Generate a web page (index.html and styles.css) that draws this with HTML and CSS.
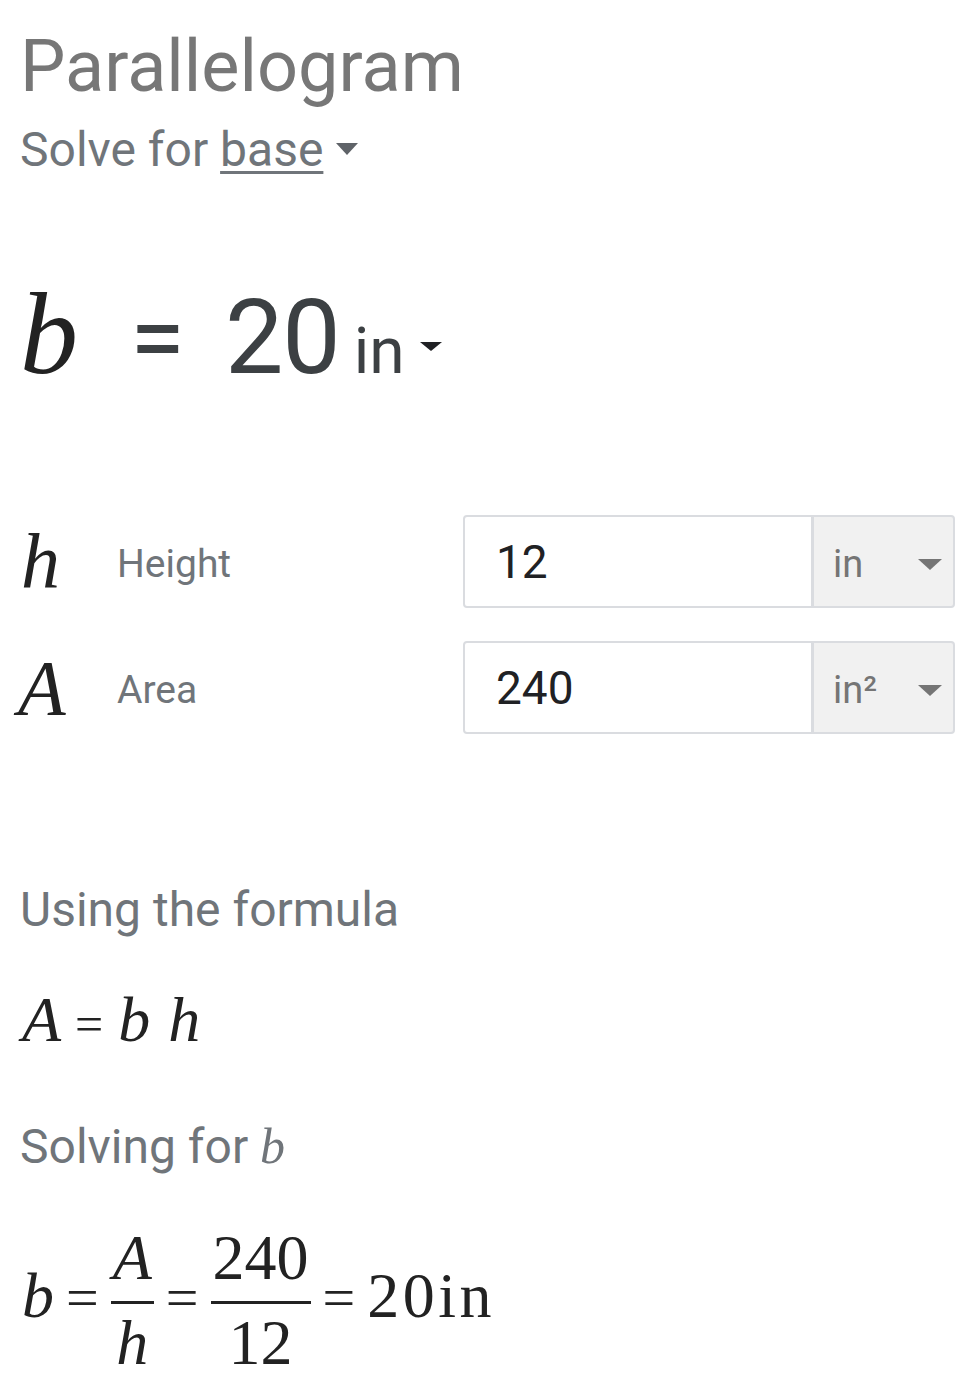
FILE: index.html
```html
<!DOCTYPE html>
<html>
<head>
<meta charset="utf-8">
<link rel="stylesheet" href="styles.css">
</head>
<body>
<div class="page">
  <h1 class="title">Parallelogram</h1>
  <div class="solve">Solve for <span class="sel">base</span><span class="caret caret-solve"></span></div>

  <div class="result"><span class="rvar">b</span><span class="req">=</span><span class="rnum">20</span><span class="runit">in</span><span class="caret caret-result"></span></div>

  <div class="rows">
    <div class="row">
      <span class="var">h</span>
      <span class="label">Height</span>
      <div class="input">12</div>
      <div class="unitsel"><span class="utext">in</span><span class="caret caret-sel"></span></div>
    </div>
    <div class="row">
      <span class="var var-a">A</span>
      <span class="label">Area</span>
      <div class="input">240</div>
      <div class="unitsel"><span class="utext">in²</span><span class="caret caret-sel"></span></div>
    </div>
  </div>

  <div class="section section-using">Using the formula</div>
  <div class="math formula"><i>A</i><span class="op op-small">=</span><i>b</i><span class="sp"></span><i>h</i></div>

  <div class="section section-solving">Solving for <i class="mi">b</i></div>
  <div class="math solution"><i>b</i><span class="op">=</span><span class="frac"><span class="num"><i>A</i></span><span class="bar"></span><span class="den"><i>h</i></span></span><span class="op">=</span><span class="frac"><span class="num">240</span><span class="bar"></span><span class="den">12</span></span><span class="op">=</span><span class="res">20in</span></div>
</div>
</body>
</html>
```
FILE: styles.css
```css
* { box-sizing: border-box; }
html, body { margin: 0; background: #fff; }
body { font-family: Roboto, "Noto Sans", sans-serif; }
.page { padding: 27px 19px 0 20px; }

.title {
  margin: 0;
  font-size: 72px;
  font-weight: 400;
  line-height: 80px;
  color: #777777;
}
.solve {
  margin-top: 15px;
  font-size: 48px;
  line-height: 56px;
  color: #70757a;
}
.sel {
  text-decoration: underline;
  text-decoration-thickness: 3px;
  text-underline-offset: 5px;
}
.caret {
  display: inline-block;
  width: 0;
  height: 0;
  border-left: 11px solid transparent;
  border-right: 11px solid transparent;
  border-top: 11px solid #5f6368;
}
.caret-solve { margin-left: 13px; vertical-align: 11px; border-top-width: 12px; }

.result {
  margin-top: 96px;
  line-height: 120px;
  height: 120px;
  color: #3c4043;
  white-space: nowrap;
}
.rvar {
  font-family: "Liberation Serif", serif;
  font-style: italic;
  font-size: 116px;
  color: #222;
}
.req { font-size: 100px; margin-left: 52px; }
.rnum { font-size: 104px; margin-left: 40px; letter-spacing: -1px; }
.runit { font-size: 64px; margin-left: 14px; }
.caret-result { margin-left: 15px; vertical-align: 22px; border-top: 9px solid #202124; }

.rows {
  margin-top: 121px;
  display: flex;
  flex-direction: column;
  gap: 33px;
}
.row {
  display: grid;
  grid-template-columns: 97px 1fr 350px 142px;
  align-items: center;
  height: 93px;
}
.var {
  font-family: "Liberation Serif", serif;
  font-style: italic;
  font-size: 78px;
  line-height: 1;
  color: #222;
  padding-left: 1px;
}
.var-a { margin-left: -3px; }
.label {
  font-size: 39px;
  color: #70757a;
  padding-top: 4px;
}
.input {
  height: 93px;
  border: 2px solid #dadce0;
  border-radius: 4px 0 0 4px;
  padding-left: 31px;
  font-size: 46px;
  color: #202124;
  display: flex;
  align-items: center;
}
.unitsel {
  height: 93px;
  border: 2px solid #dadce0;
  border-left: 1px solid #dadce0;
  border-radius: 0 4px 4px 0;
  background: #f1f1f1;
  display: flex;
  align-items: center;
  justify-content: space-between;
  padding: 5px 11px 0 19px;
}
.utext { font-size: 38px; color: #757575; }
.caret-sel { border-top-color: #757575; border-left-width: 12px; border-right-width: 12px; border-top-width: 11px; }

.section {
  font-size: 48px;
  line-height: 56px;
  color: #70757a;
}
.section-using { margin-top: 148px; }
.section-solving { margin-top: 59px; }
.mi { font-family: "Liberation Serif", serif; font-size: 50px; line-height: 1; color: #70757a; }

.math {
  font-family: "Liberation Serif", serif;
  font-size: 64px;
  line-height: 72px;
  color: #222;
  white-space: nowrap;
}
.formula { margin-top: 46px; }
.op { margin: 0 12px; font-size: 58px; }
.op-small { margin: 0 15px 0 14px; font-size: 50px; }
.sp { display: inline-block; width: 18px; }
.formula i:first-child { margin-left: 2px; }

.solution { margin-top: 51px; padding-left: 2px; }
.frac {
  display: inline-flex;
  flex-direction: column;
  align-items: center;
  vertical-align: 38px;
  line-height: 64px;
}
.bar {
  display: block;
  align-self: stretch;
  height: 3px;
  background: #222;
  margin-top: 11px;
  margin-bottom: 7px;
}
.num, .den { padding: 0 2px; }
.res { letter-spacing: 3.5px; }
```
